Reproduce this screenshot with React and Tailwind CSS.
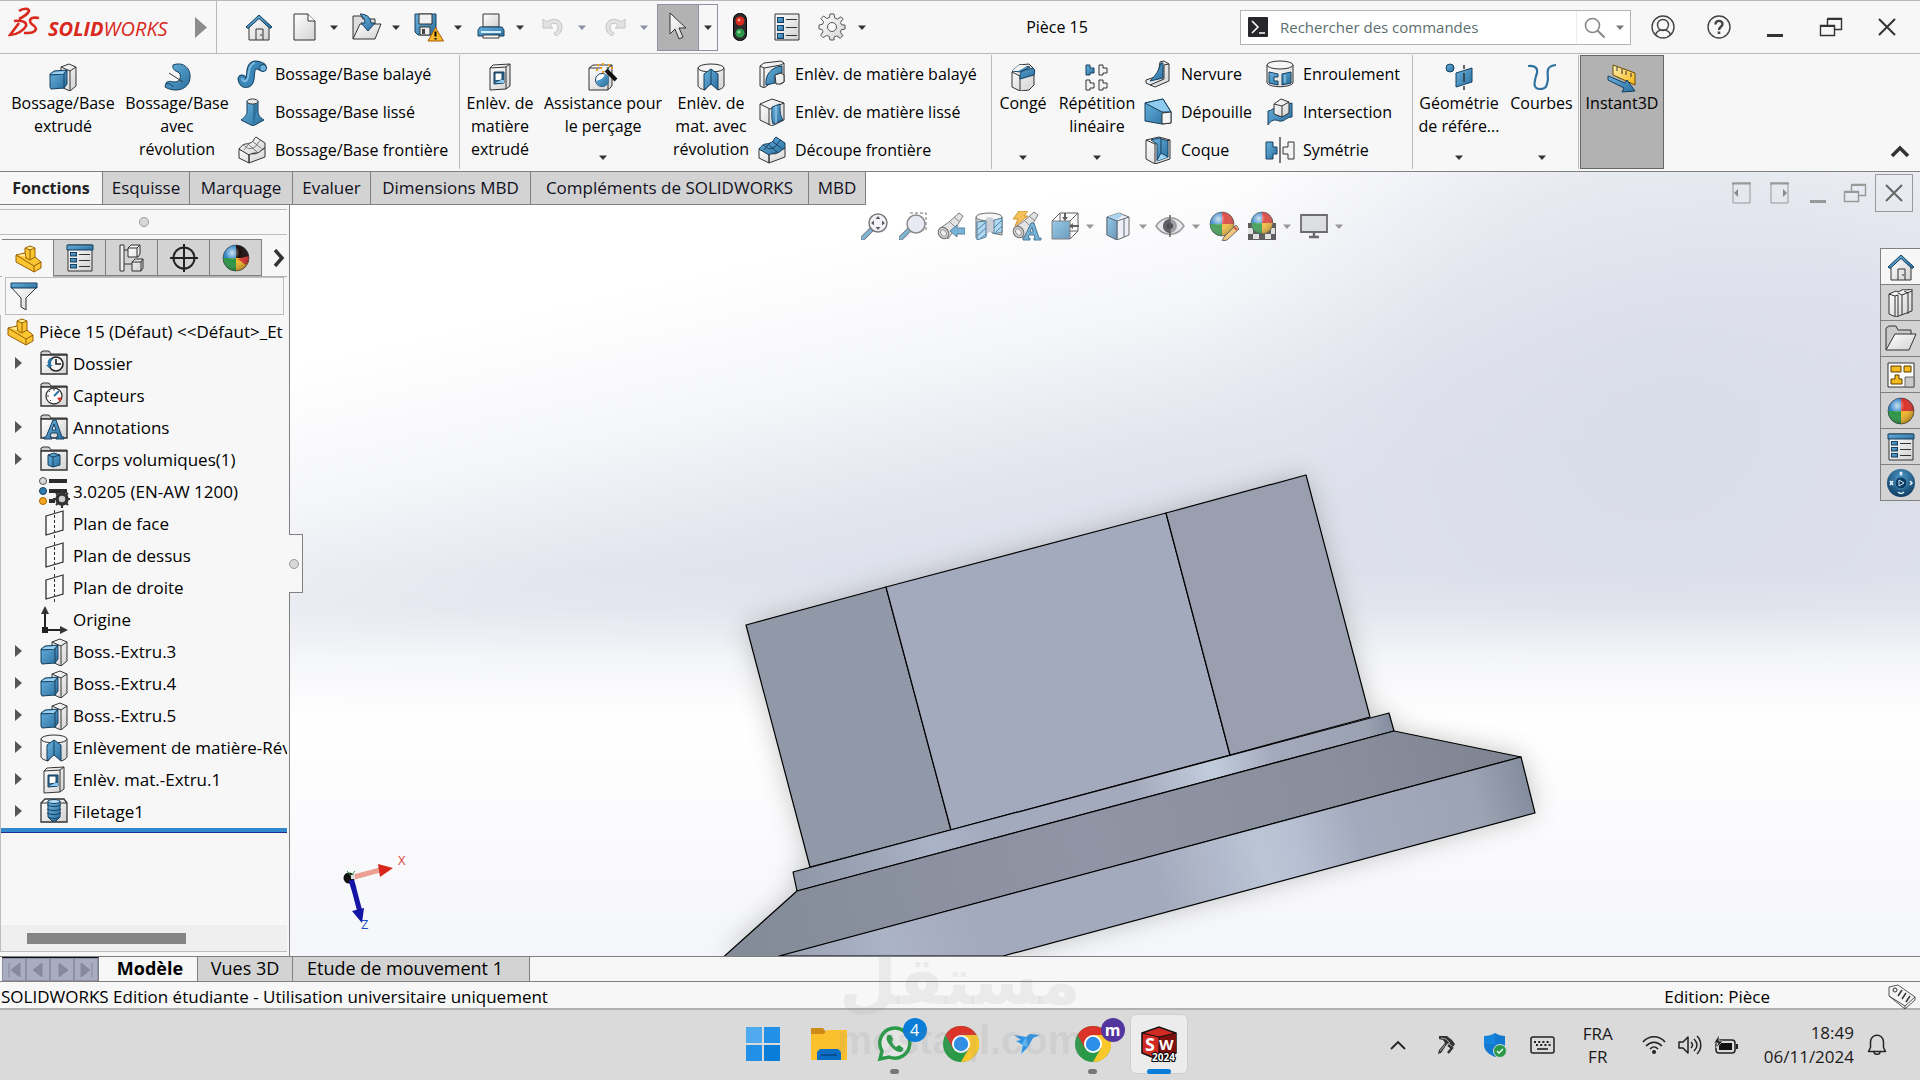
import React from "react";

const Svg = ({ s = 28, w, h, vb = "0 0 28 28", children, className = "" }) => (
  <svg width={w || s} height={h || s} viewBox={vb} fill="none" aria-hidden="true" className={"shrink-0 " + className}>
    {children}
  </svg>
);

const K = "#333";
const D = "#173f5f";

const SharedPaints = () => (
  <svg width="0" height="0" className="absolute" aria-hidden="true">
    <defs>
      <linearGradient id="blue" x1="0" y1="0" x2="1" y2="1">
        <stop offset="0" stopColor="#69b3de" />
        <stop offset="1" stopColor="#2a6f9f" />
      </linearGradient>
      <linearGradient id="gray" x1="0" y1="0" x2="1" y2="1">
        <stop offset="0" stopColor="#ffffff" />
        <stop offset="1" stopColor="#d2d2d2" />
      </linearGradient>
      <linearGradient id="gold" x1="0" y1="0" x2="1" y2="1">
        <stop offset="0" stopColor="#fff0b0" />
        <stop offset="1" stopColor="#f5b515" />
      </linearGradient>
      <radialGradient id="shine" cx="0.35" cy="0.3" r="0.75">
        <stop offset="0" stopColor="#fff" stopOpacity="0.75" />
        <stop offset="0.4" stopColor="#fff" stopOpacity="0" />
        <stop offset="1" stopColor="#000" stopOpacity="0.3" />
      </radialGradient>
      <radialGradient id="navy" cx="0.5" cy="0.3" r="0.7">
        <stop offset="0" stopColor="#4f97c6" />
        <stop offset="1" stopColor="#0d3d63" />
      </radialGradient>
    </defs>
  </svg>
);

const Caret = ({ color = "#333", className = "" }) => (
  <Svg w={8} h={5} vb="0 0 8 5" className={className}>
    <path d="M0 0.5h8L4 5z" fill={color} />
  </Svg>
);

const Ball = ({ cx = 14, cy = 14, r = 12, dark }) => (
  <g>
    <circle cx={cx} cy={cy} r={r} fill="#2f83c8" />
    <path d={`M${cx} ${cy}V${cy - r}A${r} ${r} 0 0 1 ${cx + r} ${cy}z`} fill={dark ? "#1b0d0b" : "#d9322b"} />
    <path d={`M${cx} ${cy}H${cx + r}A${r} ${r} 0 0 1 ${cx} ${cy + r}z`} fill="#f0b429" />
    <path d={`M${cx} ${cy}V${cy + r}A${r} ${r} 0 0 1 ${cx - r} ${cy}z`} fill="#2a9443" />
    {dark && <path d={`M${cx + r} ${cy - 2}a${r} ${r} 0 0 1 -3 9L${cx + 2} ${cy + 1}z`} fill="#d9322b" />}
    <circle cx={cx} cy={cy} r={r} fill="url(#shine)" stroke="#333" strokeWidth="0.6" />
  </g>
);

const Home = () => (
  <Svg>
    <path d="M4 14v13h20V14L14 4z" fill="url(#gray)" stroke={K} />
    <path d="M11 27v-11h7v11M16 21v2" stroke={K} />
    <path d="M1 14L14 2l13 12-2 1.5L14 5.500 3 15.500z" fill="url(#blue)" stroke={D} />
  </Svg>
);
const NewDoc = () => (
  <Svg>
    <path d="M3 1h14l7 7v19H3z" fill="url(#gray)" stroke={K} />
    <path d="M17 1v7h7" fill="#fff" stroke={K} />
  </Svg>
);
const Open = () => (
  <Svg w={32} h={28} vb="0 0 32 28">
    <path d="M2 26V3h8l2 3h12v6" fill="#ddd" stroke={K} />
    <path d="M2 26L9 11h21l-6 15z" fill="url(#gray)" stroke={K} />
    <path d="M9 1c6 0 11 3 11 9h4l-7 8-7-8h4c0-4-2-6-5-9z" fill="url(#blue)" stroke={D} />
  </Svg>
);
const Save = () => (
  <Svg w={30} h={29} vb="0 0 30 29">
    <path d="M1 1h21v21H4l-3-3z" fill="url(#blue)" stroke={D} />
    <path d="M5 1h13v10H5z" fill="#f1f1f1" stroke={K} />
    <path d="M6 14h10v8H6z" fill="#eee" stroke={K} />
    <path d="M8 16h3v5H8z" fill="#444" />
    <path d="M21.500 14.500l8 13.500h-15.500z" fill="#fbb92c" stroke="#a85a06" />
    <path d="M21.500 18.500v5M21.500 25v1.600" stroke="#000" strokeWidth="2" />
  </Svg>
);
const Print = () => (
  <Svg>
    <path d="M6 1h16v13H6z" fill="url(#gray)" stroke={K} />
    <path d="M3 14h22l2 3v6H1v-6z" fill="url(#blue)" stroke={D} />
    <path d="M4 19h20" stroke="#d7efff" strokeWidth="2" />
    <path d="M6 22h16v3H6z" fill="#fff" stroke={K} />
  </Svg>
);
const Undo = ({ flip }) => (
  <Svg s={24} vb="0 0 24 24" className={flip ? "-scale-x-100" : ""}>
    <path d="M2 4l3.500 3C12 2 21 4 21 12c0 4-2 7-6 9l-2-3c3-1 4-3 4-6 0-4-5-5-8-2l3 3H2z" fill="#e2e2e2" stroke="#c4c4c4" />
  </Svg>
);
const Cursor = () => (
  <Svg w={20} h={30} vb="0 0 20 30">
    <path d="M2 1v21l5-5 4 10 4-2-4-9h7z" fill="url(#gray)" stroke={K} />
  </Svg>
);
const Traffic = () => (
  <Svg w={16} h={28} vb="0 0 16 28">
    <rect x="1.500" y="0.500" width="13" height="27" rx="6" fill="#2c2c2c" stroke="#000" />
    <circle cx="8" cy="8" r="4.500" fill="#d92b1c" />
    <circle cx="8" cy="20" r="4.500" fill="#2c9a48" />
    <circle cx="7" cy="7" r="1.500" fill="#ff9b86" />
    <circle cx="7" cy="19" r="1.500" fill="#98dfa6" />
  </Svg>
);
const ListIcon = ({ header }) => (
  <Svg>
    <path d="M2 1h24v26H2z" fill="url(#gray)" stroke={K} />
    {header && <path d="M1 1h26v5H1z" fill="url(#blue)" stroke={D} />}
    {(header ? [8.5, 14.5, 20.5] : [4.5, 12.5, 20.5]).map((y) => (
      <g key={y}>
        <rect x="4.500" y={y} width="6" height={header ? 3.5 : 5} fill="url(#blue)" stroke={D} />
        <path d={`M13 ${y + 2}h11`} stroke={K} />
      </g>
    ))}
  </Svg>
);
const Gear = () => (
  <Svg>
    <path
      d="M12 1h4l.8 4 2.600 1.100L23 3.800 25.200 6 22.500 9.300l1 2.500L27 12v4l-3.600.7-1 2.400 2.400 3.600-2.600 2.600-3.400-2.400-2.600 1L16 27h-4l-.9-3.600-2.400-1-3.500 2.300-2.600-2.600 2.400-3.400-1-2.400L1 16v-4l3.600-.7 1-2.400L3 5.600 5.600 3l3.300 2.500 2.500-1z"
      fill="url(#gray)"
      stroke="#555"
    />
    <circle cx="14" cy="14" r="4.500" fill="#f7f7f7" stroke="#555" />
  </Svg>
);

const Extrude = () => (
  <Svg>
    <path d="M12 4l8-3 7 3v19l-6 5-9-4z" fill="url(#gray)" stroke={K} />
    <path d="M12 4l9 4v20M21 8l6-4" stroke={K} />
    <path d="M1 11l4-3 13-1v14l-3 4-13 1-1-2z" fill="url(#blue)" stroke={D} />
    <path d="M1 11l1 1 13-1 3-4M15 11v13" stroke={D} />
    <path d="M2 11l4-2 10-1-2 3z" fill="#9cd0ef" />
  </Svg>
);
const Revolve = () => (
  <Svg>
    <path d="M10 2c11-4 18 4 17 13-1 12-15 15-25 9l1-4c3-3 6-1 9-1 6 0 7-8 3-10-3-1-6-3-5-7z" fill="url(#blue)" stroke={D} />
    <path d="M3 21c2-1 6 0 7 3" stroke={D} />
    <path d="M6 10l14 9" stroke={K} />
  </Svg>
);
const Sweep = () => (
  <Svg w={30} h={28} vb="0 0 30 28">
    <path d="M5 19c1 6 7 6 8 0s0-14 6-14c3 0 4 1 6 2" stroke={D} strokeWidth="9" strokeLinecap="round" />
    <path d="M5 19c1 6 7 6 8 0s0-14 6-14c3 0 4 1 6 2" stroke="#3b86b8" strokeWidth="7" strokeLinecap="round" />
    <path d="M5 18c1 5 5 4 6-1s1-13 7-14" stroke="#7fbbe0" strokeWidth="2" />
    <circle cx="26" cy="8" r="3.500" fill="#6db4e0" stroke={D} />
  </Svg>
);
const Loft = () => (
  <Svg>
    <path d="M9 3v10c0 4-2 6-6 9l12 6 11-6c-5-3-6-6-6-9V3z" fill="url(#blue)" stroke={D} />
    <path d="M15 6v22c3-8 3-13 5-22z" fill="#235f8b" opacity="0.6" />
    <ellipse cx="14.500" cy="3.500" rx="5.500" ry="2.500" fill="#e8e8e8" stroke={K} />
  </Svg>
);
const Boundary = ({ blue }) => (
  <Svg>
    <path d="M1 13l10 5v9L1 22z M11 18c4-1 5 1 8-1l8-5v9l-16 6z" fill="url(#gray)" stroke={K} />
    <path d="M1 13C6 6 8 9 12 7c4-1 4-5 6-6l9 6v5c-4 1-5 5-8 5s-5 0-8 2z" fill={blue ? "url(#blue)" : "url(#gray)"} stroke={blue ? D : K} />
    <path d="M5 9c4 2 5 5 10 3 4-1 4-6 8-8M10 8l9 8M14 5l9 7M6 14c3-3 3-5 6-7" stroke={blue ? D : "#777"} />
  </Svg>
);
const CutExtrude = () => (
  <Svg>
    <path d="M4 5l3-3 17-1v22l-4 3-16 1z" fill="url(#gray)" stroke={K} />
    <path d="M4 5l16-1v22M20 4l4-3" stroke={K} />
    <path d="M8 9h10v11l-10 1z" fill="#2a6f9f" stroke={D} />
    <path d="M9 10h7v7l-7 1z" fill="#fff" stroke={D} />
    <path d="M9 20l6-3h3v3z" fill="#8cc9ee" />
  </Svg>
);
const HoleWizard = () => (
  <Svg w={30} h={28} vb="0 0 30 28">
    <path d="M1 5l4-3h19v21l-4 4-19 0z" fill="url(#gray)" stroke={K} />
    <path d="M1 5h19v22M20 5l4-3" stroke={K} />
    <circle cx="14" cy="17" r="6.500" fill="#fff" stroke={D} />
    <path d="M8 18c4-1 8-3 9-7a6.500 6.500 0 1 1-9 7z" fill="url(#blue)" />
    <path d="M17 6l11 11" stroke="#111" strokeWidth="4" />
    <path d="M15 4l3 3" stroke="#fff" strokeWidth="4" />
    <g fill="#f29a1c">
      <rect x="9" y="1" width="2" height="2" /><rect x="14" y="0" width="2" height="2" /><rect x="20" y="1" width="2" height="2" />
      <rect x="12" y="4" width="2" height="2" /><rect x="8" y="6" width="2" height="2" /><rect x="23" y="4" width="2" height="2" />
      <rect x="14" y="8" width="2" height="2" />
    </g>
  </Svg>
);
const CutRevolve = () => (
  <Svg>
    <path d="M1 5v18c1 2 3 3 7 4l6-9 7 9c3-1 5-2 6-4V5z" fill="url(#gray)" stroke={K} />
    <ellipse cx="14" cy="5" rx="13" ry="4" fill="#f4f4f4" stroke={K} />
    <path d="M14 6l-7 5v16l7-6 7 6V11z" fill="url(#blue)" stroke={D} />
    <path d="M14 6v15" stroke={D} />
  </Svg>
);
const CutSweep = () => (
  <Svg>
    <path d="M2 6l4-3 17-2 3 2v19l-3 2-9-2-8 6-4-2z" fill="url(#gray)" stroke={K} />
    <path d="M2 6l4 2 17-3 3-2M6 8v19" stroke={K} />
    <path d="M8 25C7 15 13 7 24 6v7c-6 0-8 4-7 10z" fill="url(#blue)" stroke={D} />
    <path d="M17 15l6-2 3 2v7l-4 2h-4z" fill="#eee" stroke={K} />
  </Svg>
);
const CutLoft = () => (
  <Svg>
    <path d="M2 6l12-5 12 4v17l-12 6-12-6z" fill="url(#gray)" stroke={K} />
    <path d="M2 6l10 5 14-6M11 11v16" stroke={K} />
    <path d="M14 9l8-3c0 8 0 11 3 16l-10 4c-2-7-1-10-1-17z" fill="url(#blue)" stroke={D} />
    <path d="M18 8v17" stroke="#b8ddf4" />
  </Svg>
);
const Fillet = () => (
  <Svg>
    <path d="M3 9l7-7 10-1 5 5v16l-5 5-9 1-8-4z" fill="url(#gray)" stroke={K} />
    <path d="M3 9l8 4v15M10 2L3 9" stroke={K} />
    <path d="M11 13c0-4 2-5 5-6l8-2c2 1 2 4 1 7l-14 4z M3 8l7-6 11 2-10 5z" fill="url(#blue)" stroke={D} />
    <path d="M3 8l7-6 10 0-11 6z" fill="#f2f2f2" />
  </Svg>
);
const Pattern = () => (
  <Svg>
    {[[3, 2, 1], [16, 2, 0], [3, 17, 0], [16, 17, 0]].map(([x, y, b]) => (
      <path key={x + "-" + y} d={`M${x} ${y}h4v3h4v5h-4v2h-4z`} fill={b ? "url(#blue)" : "#f4f4f4"} stroke={b ? D : K} />
    ))}
  </Svg>
);
const Rib = () => (
  <Svg>
    <path d="M16 2l4-1 5 3v17l-14 6-9-4v-3l12-4z" fill="url(#gray)" stroke={K} />
    <path d="M20 5l5-1M20 5v14L6 25" stroke={K} />
    <path d="M19 3v15l-13 3C12 15 15 10 17 3z" fill="url(#blue)" stroke={D} />
  </Svg>
);
const Draft = () => (
  <Svg>
    <path d="M1 5l18-4 8 13v11l-9 1L1 23z" fill="url(#blue)" stroke={D} />
    <path d="M1 5l18-4 8 13h-9z" fill="#8ecbef" stroke={D} />
    <path d="M18 15l9-1v11l-9 1z" fill="#f4f4f4" stroke={K} />
  </Svg>
);
const Shell = () => (
  <Svg>
    <path d="M2 4l13-3 11 3v19l-15 5-9-5z" fill="url(#gray)" stroke={K} />
    <path d="M2 4l9 4v20M11 8l15-4" stroke={K} />
    <path d="M7 4l8-2 9 3v16l-11 4V8z" fill="url(#blue)" stroke={D} />
    <path d="M13 25l4-8 7 4z" fill="#9bd3f3" />
    <path d="M17 3v14l7 4M17 17l-4 7" stroke={D} />
  </Svg>
);
const Wrap = () => (
  <Svg>
    <path d="M1 5v18c3 5 23 5 26 0V5z" fill="url(#gray)" stroke={K} />
    <ellipse cx="14" cy="5" rx="13" ry="4" fill="#f6f6f6" stroke={K} />
    <path d="M3 12l9 2v3H8v4h4v4l-9-2zM16 14l9-2v11l-9 2z" fill="url(#blue)" stroke={D} />
    <path d="M19 15v8" stroke="#b8ddf4" />
  </Svg>
);
const Intersect = () => (
  <Svg>
    <path d="M2 13c4 0 4-3 8-3 6 0 8-3 16-5v14c-6 0-7 5-13 4-4-2-8-1-11 4z" fill="url(#blue)" stroke={D} />
    <path d="M8 6l7-5 8 3v11l-7 4-8-3z" fill="url(#gray)" stroke={K} />
    <path d="M8 6l8 2v11M16 8l7-4" stroke={K} />
  </Svg>
);
const Mirror = () => (
  <Svg w={30} h={28} vb="0 0 30 28">
    <path d="M1 6h7v5h4v7H8v5H1z" fill="url(#blue)" stroke={D} />
    <path d="M29 6h-6v5h-5v7h5v5h6z" fill="#f4f4f4" stroke={K} />
    <path d="M15 1v26" stroke="#000" />
  </Svg>
);
const RefGeom = () => (
  <Svg>
    <circle cx="5" cy="5" r="4" fill="url(#blue)" stroke={D} />
    <path d="M11 10l16-5v14l-16 5z" fill="url(#blue)" stroke={D} />
    <path d="M19 2v4M19 10v9M19 23v4" stroke={K} strokeWidth="1.500" />
  </Svg>
);
const Curves = () => (
  <Svg>
    <path d="M0 3c8-1 11 3 8 10-2 7-3 13 4 13s7-4 8-10c-1-9-1-13 8-14" stroke="#2f719f" strokeWidth="2.200" />
  </Svg>
);
const Instant = () => (
  <Svg w={32} h={30} vb="0 0 32 30">
    <path d="M7 2l22 8v12L7 12z" fill="url(#gold)" stroke="#6b4a00" />
    <path d="M11 4v4M16 6v5M20 8v4M25 10v4" stroke="#333" />
    <path d="M2 13l17 7 2-3 8 11-13 1 2-4L2 17z" fill="url(#blue)" stroke={D} />
  </Svg>
);

const PartIcon = () => (
  <Svg>
    <path d="M2 10l9-2V3l5-2 5 2v9l6 5v6l-7 4L2 17z" fill="#fbc531" stroke="#9a5e05" />
    <path d="M2 10l18 11 7-4M20 21v6M11 8l1 5 4 2 5-3M11 3l5 2 5-2M16 5v9" stroke="#9a5e05" />
    <path d="M12 3l4-1 4 1-4 1zM4 10l7-1v3z" fill="#fff1a8" />
  </Svg>
);
const ConfigIcon = () => (
  <Svg>
    <path d="M2 1h4v26H2zM6 6h5M6 20h8" stroke={K} fill="#eee" />
    <path d="M10 4l3-3h9v9l-2 3h-10zM14 18l3-3h8v9l-2 3h-9z" fill="url(#gray)" stroke={K} />
    <path d="M10 4h9v9M19 4l3-3M14 18h9v9M23 18l2-3" stroke={K} />
  </Svg>
);
const Target = () => (
  <Svg>
    <circle cx="14" cy="14" r="10.500" stroke="#222" strokeWidth="2" />
    <path d="M14 0v28M0 14h28" stroke="#222" strokeWidth="2" />
  </Svg>
);
const Funnel = () => (
  <Svg>
    <path d="M1 5l10 11v9l5 3V16L27 5z" fill="url(#gray)" stroke={K} />
    <path d="M1 1h26v5H1z" fill="url(#blue)" stroke={D} />
  </Svg>
);
const Folder = ({ children }) => (
  <Svg>
    <path d="M1 5V2l2-1h6l2 3h16v1z" fill="#cfcfcf" stroke={K} />
    <path d="M1 5h26v19H1z" fill="url(#gray)" stroke={K} strokeWidth="1.400" />
    {children}
  </Svg>
);
const History = () => (
  <Folder>
    <circle cx="16" cy="14" r="7" fill="#f4f4f4" stroke="#222" strokeWidth="1.600" />
    <path d="M16 9v5h5" stroke="#222" strokeWidth="1.600" />
    <path d="M10 8c-2 2-3 4-2 7H6l3 3 4-3h-2c0-3 0-4 2-6z" fill="#2a74a5" />
  </Folder>
);
const Sensors = () => (
  <Folder>
    <circle cx="14" cy="14" r="8" fill="#fff" stroke="#333" strokeWidth="1.300" />
    <path d="M14 14l5-5" stroke="#2a74a5" strokeWidth="2" />
    <path d="M14 7v2M7 14h2M9 9l1 1M10 19l1-1" stroke="#333" />
    <path d="M22 15l-5 1 3 4z" fill="#d9322b" />
  </Folder>
);
const Notes = () => (
  <Folder>
    <path d="M6 23l7-17h3l6 17h2v2h-8v-2h2l-1-4h-6l-1 4h2v2H4v-2zM12 16h4l-2-6z" fill="url(#blue)" stroke={D} fillRule="evenodd" />
  </Folder>
);
const Bodies = () => (
  <Folder>
    <path d="M8 9l6-2 6 2v10l-7 2-5-2z" fill="url(#blue)" stroke={D} />
    <path d="M8 9l5 2v10M13 11l7-2" stroke={D} />
  </Folder>
);
const Material = () => (
  <Svg w={32} h={32} vb="0 0 32 32">
    <circle cx="5" cy="5" r="3.500" fill="#d8d8d8" stroke="#555" />
    <circle cx="5" cy="15" r="3.500" fill="#2f7cb0" stroke={D} />
    <circle cx="5" cy="25" r="3.500" fill="#f3a81c" stroke="#a86500" />
    <path d="M11 5h18M11 15h18M11 25h6" stroke="#2b2b2b" strokeWidth="4" />
    <circle cx="24" cy="23" r="5" stroke="#333" strokeWidth="3.500" fill="#ccc" />
    <path d="M24 14v4M24 28v4M15 23h4M29 23h3M18 17l3 3M27 26l3 3M30 17l-3 3M18 29l3-3" stroke="#333" strokeWidth="2.200" />
  </Svg>
);
const Plane = () => (
  <Svg>
    <path d="M6 6l17-5v19L6 25z" fill="#fafafa" stroke={K} strokeWidth="1.300" />
    <path d="M14.500 0v28" stroke={K} strokeDasharray="3 2" />
  </Svg>
);
const Origin = () => (
  <Svg>
    <path d="M5 24V5M5 24h17" stroke="#222" strokeWidth="2" />
    <path d="M5 0l4 8H1zM28 24l-8 4v-8z" fill="#333" />
    <path d="M2 21h6v6H2z" fill="#222" />
  </Svg>
);
const Thread = () => (
  <Svg>
    <path d="M1 5l4-4h19l3 4v19H1z" fill="url(#gray)" stroke={K} strokeWidth="1.300" />
    <path d="M1 5h26" stroke={K} />
    <path d="M8 3h12v16l-4 4h-4l-4-4z" fill="url(#blue)" stroke={D} />
    <path d="M7 7c4 2 10 2 14 0M7 11c4 2 10 2 14 0M7 15c4 2 10 2 14 0M8 19c4 2 8 2 12 0" stroke={D} />
    <ellipse cx="14" cy="3.500" rx="6" ry="2" fill="#b3dcf3" stroke={D} />
  </Svg>
);

const Lens = ({ children }) => (
  <>
    <path d="M11 17l-9 9" stroke="#555" strokeWidth="5" strokeLinecap="round" />
    <path d="M10 18l-8 8" stroke="#6aa9cf" strokeWidth="3.500" strokeLinecap="round" />
    {children}
  </>
);
const ZoomFit = () => (
  <Svg>
    <Lens>
      <circle cx="17" cy="11" r="9" fill="#f2f3f8" stroke="#666" strokeWidth="1.500" />
      <path d="M17 4l2.500 3h-5zM17 18l2.500-3h-5zM10 11l3-2.500v5zM24 11l-3-2.500v5z" fill="#444" />
    </Lens>
  </Svg>
);
const ZoomArea = () => (
  <Svg>
    <path d="M11 1h16v17h-4" stroke="#555" strokeDasharray="3 2" />
    <Lens>
      <circle cx="17" cy="12" r="9" fill="#e4e6f0" stroke="#777" strokeWidth="1.500" />
    </Lens>
  </Svg>
);
const Scope = () => (
  <g>
    <path d="M2 17L12 10l10-9 4 3-6 10-9 13z" fill="#dedede" stroke="#666" />
    <path d="M12 9l7 7M17 5l6 5" stroke="#777" />
    <ellipse cx="6.500" cy="21" rx="5" ry="6" transform="rotate(-35 6.500 21)" fill="#c9c9c9" stroke="#555" />
    <ellipse cx="6.500" cy="21" rx="2.500" ry="3.500" transform="rotate(-35 6.500 21)" fill="#eee" stroke="#888" />
  </g>
);
const PrevView = () => (
  <Svg>
    <Scope />
    <path d="M13 19l7-6v3h8v6h-8v3z" fill="#5ea6d2" stroke="#3a6a8c" />
  </Svg>
);
const Section = () => (
  <Svg>
    <path d="M1 5v21l10-2V9h6v12l10 2V5z" fill="#d5d7de" stroke="#555" />
    <ellipse cx="14" cy="5" rx="13" ry="4" fill="#f6f6f6" stroke="#555" />
    <path d="M11 6c2-1 5-1 7 0v14c-3-1-5 1-7 3z" fill="#c4c6ce" />
    <path d="M2 10l9-1v16l-9 3zM19 8l8-2v14l-8 2z" fill="#a5d2ee" stroke="#3a6a8c" />
    <path d="M2 18l9-8M2 24l9-8M5 27l6-5M19 16l8-8M20 21l7-7" stroke="#2a6f9f" />
  </Svg>
);
const DynView = () => (
  <Svg w={30} h={30} vb="0 0 30 30">
    <Scope />
    <path d="M7 0h9l-4 5h4L3 15l3-7H1z" fill="#f5b73c" stroke="#c98518" />
    <path d="M12 27l7-15h3l5 15h2v2h-7v-2h1l-1-3h-5l-1 3h2v2h-7v-2zM18 21h3l-1-5z" fill="#5ea6d2" stroke="#33658a" fillRule="evenodd" />
  </Svg>
);
const Orient = () => (
  <Svg>
    <path d="M1 9l8-8h18v18l-8 8M27 1l-8 8M9 1v8M27 19H19" stroke="#444" />
    <path d="M1 9h18v18H1z" fill="url(#blue)" stroke="#444" opacity="0.8" />
    <path d="M14 1v5M28 14h-7" stroke="#444" strokeWidth="2" />
    <path d="M14 9l-3-4h6zM18 14l4-3v6z" fill="#444" />
  </Svg>
);
const Display = () => (
  <Svg>
    <path d="M3 5l12-4 10 4v18l-12 5-10-5z" fill="#eceef5" stroke="#555" />
    <path d="M3 5l10 4v19L3 23z" fill="url(#blue)" stroke="#456" opacity="0.8" />
    <path d="M3 5l12-4 4 2-6 5z" fill="#9fd0ee" />
    <path d="M3 5l10 4 12-4M13 9v19M20 7v18" stroke="#456" />
  </Svg>
);
const Eye = () => (
  <Svg w={30} h={24} vb="0 0 30 24">
    <path d="M1 12C8 1 22 1 29 12 22 23 8 23 1 12z" fill="#e8e8ec" stroke="#888" strokeWidth="1.500" />
    <circle cx="15" cy="12" r="7" fill="#8f9096" />
    <path d="M15 5a7 7 0 0 0 0 14z" fill="#45464c" />
    <circle cx="15" cy="12" r="3" fill="#2a2a2e" />
    <path d="M15 1v22" stroke="#444" strokeWidth="1.500" />
  </Svg>
);
const Appearance = () => (
  <Svg w={30} h={30} vb="0 0 30 30">
    <Ball cx={13} cy={13} r={12} />
    <path d="M27 14l-12 12-2 4 5-1 12-11z" fill="#f0bd63" stroke="#555" />
    <path d="M25 16l3 3" stroke="#c33" strokeWidth="2" />
  </Svg>
);
const Scene = () => (
  <Svg w={28} h={30} vb="0 0 28 30">
    <path d="M0 12h28v17H0z" fill="#444" />
    <path d="M4 12h5v5H4zM0 17h5v6H0zM5 23h6v5H5zM23 17h4v6h-4zM17 23h6v5h-6z" fill="#ddd" />
    <Ball cx={14} cy={12} r={11} />
  </Svg>
);
const Monitor = () => (
  <Svg>
    <path d="M1 3h26v17H1z" fill="#d9dadf" stroke="#555" strokeWidth="1.800" />
    <path d="M14 20v4M9 25h10" stroke="#555" strokeWidth="2.500" />
  </Svg>
);

const Books = () => (
  <Svg>
    <path d="M2 5l7-3 2 1 6-3 2 1 6-1v22l-16 6-7-3z" fill="url(#gray)" stroke={K} />
    <path d="M2 5l6 2v20M8 7l3-1v21M11 4l4 2v20M17 2l4 2v21M15 6l10-4" stroke={K} />
  </Svg>
);
const BigFolder = () => (
  <Svg w={32} h={28} vb="0 0 32 28">
    <path d="M1 25V3l3-2h7l2 4h13v5" fill="#c9c9c9" stroke={K} />
    <path d="M1 25L10 9h21l-7 16z" fill="url(#gray)" stroke={K} />
  </Svg>
);
const Palette = () => (
  <Svg>
    <path d="M1 2h26v24H1z" fill="#fff" stroke="#333" />
    <path d="M4 5h10v6H4zM17 5h7v6h-7zM8 14h4v4h3v5H4v-5h4z" fill="#f6bc1f" stroke="#5d3d00" />
    <path d="M18 16h9v10h-9z" fill="#c8c8c8" stroke="#666" />
  </Svg>
);
const Forum = () => (
  <Svg s={30} vb="0 0 30 30">
    <circle cx="15" cy="15" r="14" fill="url(#navy)" />
    <circle cx="15" cy="15" r="6" stroke="#3f86b8" fill="#0d3d63" />
    <path d="M13 12l5 3-5 3z" stroke="#cfe8fa" />
    <path d="M4 13l3 4M7 13l-3 4M14 4l2 3M16 4l-2 3M12 24c2 2 4 2 6 0M24 13l2 2-2 2" stroke="#e6f4ff" strokeWidth="1.500" />
  </Svg>
);

const BigButton = ({ icon, lines, caret, className = "" }) => (
  <button className={"flex h-[114px] shrink-0 flex-col items-center whitespace-nowrap border border-transparent pt-[7px] " + className}>
    <span className="flex h-[29px] items-start justify-center">{icon}</span>
    {lines.map((l) => (
      <span key={l} className="block leading-[23px]">{l}</span>
    ))}
    {caret && <Caret className="mt-auto mb-2" />}
  </button>
);

const SmallColumn = ({ items, className = "" }) => (
  <div className={"flex shrink-0 flex-col " + className}>
    {items.map(([icon, label]) => (
      <button key={label} className="flex h-[38px] items-center gap-2 whitespace-nowrap text-left">
        <span className="flex w-[30px] shrink-0 justify-center">{icon}</span>
        {label}
      </button>
    ))}
  </div>
);

const Sep = () => <div className="h-[114px] w-px shrink-0 bg-[#bcbcbc]" />;

const SplitTool = ({ icon, label, muted }) => (
  <div className="flex h-12 shrink-0 items-center">
    <button aria-label={label} className="flex w-[33px] justify-center">{icon}</button>
    <button aria-label={label + " options"} className="flex w-[26px] justify-center">
      <Caret color={muted ? "#8b8fa3" : "#333"} />
    </button>
  </div>
);

const RestoreIcon = ({ color }) => (
  <Svg w={24} h={20} vb="0 0 24 20">
    <path d="M8.500 1.500h14v11h-7M1.500 8.500h14v10h-14zM8.500 2v6" stroke={color} strokeWidth="1.400" />
    <path d="M8 2h15M1 9h15" stroke={color} strokeWidth="2" />
  </Svg>
);
const CloseIcon = ({ color }) => (
  <Svg w={18} h={18} vb="0 0 18 18">
    <path d="M1 1l16 16M17 1L1 17" stroke={color} strokeWidth="2" />
  </Svg>
);

const TitleBar = () => (
  <header className="flex h-[54px] shrink-0 items-center border-t border-b border-[#b9b9b9] bg-[#f7f7f7]">
    <div className="flex h-full w-[217px] shrink-0 items-center border-r border-[#b9b9b9] pl-2">
      <Svg w={32} h={32} vb="0 0 32 32" className="mb-2">
        <path
          d="M11 4c4-3 10-3 10 0-1 3-6 6-10 8M11 16L2 28c7 0 14-5 16-9 1-4-4-6-12-5M31 11c-6-1-9 0-9 3 0 4 6 4 6 8-1 4-6 4-12 4"
          stroke="#d9291c"
          strokeWidth="2.600"
        />
      </Svg>
      <span className="ml-2 mt-1 text-[20px] italic leading-none text-[#d9291c]">
        <b>SOLID</b>WORKS
      </span>
      <button aria-label="Afficher le menu" className="ml-auto mr-[9px]">
        <Svg w={12} h={21} vb="0 0 12 21"><path d="M0 0l12 10.500L0 21z" fill="#8c8c8c" /></Svg>
      </button>
    </div>
    <div className="flex shrink-0 items-center">
      <button aria-label="Accueil" className="ml-[28px] mr-[15px]"><Home /></button>
      <div className="flex gap-[3px]">
        <SplitTool icon={<NewDoc />} label="Nouveau" />
        <SplitTool icon={<Open />} label="Ouvrir" />
        <SplitTool icon={<Save />} label="Enregistrer" />
        <SplitTool icon={<Print />} label="Imprimer" />
        <SplitTool icon={<Undo />} label="Annuler" muted />
        <SplitTool icon={<Undo flip />} label="Rétablir" muted />
      </div>
      <div className="flex h-[47px] w-[61px] border border-[#8d93a5]">
        <button aria-label="Sélectionner" className="flex w-[41px] items-center justify-center border-r border-[#8d93a5] bg-[#b2b2b2]"><Cursor /></button>
        <button aria-label="Options de sélection" className="flex flex-1 items-center justify-center"><Caret /></button>
      </div>
      <button aria-label="Reconstruire" className="ml-[14px]"><Traffic /></button>
      <button aria-label="Propriétés" className="ml-[25px]"><ListIcon /></button>
      <button aria-label="Options" className="ml-[17px]"><Gear /></button>
      <button aria-label="Plus d'options" className="ml-[12px]"><Caret /></button>
    </div>
    <h1 className="flex-1 pl-2 text-center text-[16px]">Pièce 15</h1>
    <form className="flex h-[35px] w-[391px] shrink-0 items-center border border-[#b4b4b4] bg-white">
      <Svg w={20} h={20} vb="0 0 20 20" className="ml-[7px]">
        <rect width="20" height="20" rx="1" fill="#26262b" />
        <path d="M4 4l6 6-6 6M11 16h6" stroke="#fff" strokeWidth="1.500" />
      </Svg>
      <input
        aria-label="Rechercher des commandes"
        placeholder="Rechercher des commandes"
        className="ml-3 h-full min-w-0 flex-1 border-r border-[#eee] text-[15px] outline-none placeholder:text-[#5a6e6e]"
      />
      <button type="button" aria-label="Rechercher" className="ml-[7px]">
        <Svg w={21} h={21} vb="0 0 21 21">
          <circle cx="8.500" cy="8.500" r="7" stroke="#888" strokeWidth="1.600" />
          <path d="M13.500 13.500l7 7" stroke="#888" strokeWidth="2" />
        </Svg>
      </button>
      <button type="button" aria-label="Options de recherche" className="ml-[11px] mr-[6px]"><Caret color="#777" /></button>
    </form>
    <button aria-label="Connexion" className="ml-5">
      <Svg s={24} vb="0 0 24 24">
        <circle cx="12" cy="12" r="11" stroke="#444" strokeWidth="1.400" />
        <circle cx="12" cy="10" r="5.500" stroke="#444" strokeWidth="1.400" />
        <path d="M4.500 20c1-4 4-5 7.500-5s6.500 1 7.500 5" stroke="#444" strokeWidth="1.400" />
      </Svg>
    </button>
    <button aria-label="Aide" className="ml-8">
      <Svg s={24} vb="0 0 24 24">
        <circle cx="12" cy="12" r="11" stroke="#444" strokeWidth="1.400" />
        <path d="M8.500 9.500c0-5 7-4.500 7-.5 0 3-3.500 2.500-3.500 6" stroke="#444" strokeWidth="2.400" />
        <path d="M12 16.500v2.500" stroke="#444" strokeWidth="2.600" />
      </Svg>
    </button>
    <button aria-label="Réduire" className="ml-9 mt-4 h-[3px] w-4 bg-[#333]" />
    <button aria-label="Restaurer" className="ml-9"><RestoreIcon color="#333" /></button>
    <button aria-label="Fermer" className="ml-[35px] mr-6"><CloseIcon color="#333" /></button>
  </header>
);

const Ribbon = () => (
  <div className="flex h-[118px] shrink-0 items-start overflow-hidden border-b border-[#808080] bg-[#f7f7f7] pt-px text-[16px]">
    <BigButton className="ml-[6px] w-[114px]" icon={<Extrude />} lines={["Bossage/Base", "extrudé"]} />
    <BigButton className="w-[114px]" icon={<Revolve />} lines={["Bossage/Base", "avec", "révolution"]} />
    <SmallColumn
      className="ml-[3px] w-[222px]"
      items={[[<Sweep />, "Bossage/Base balayé"], [<Loft />, "Bossage/Base lissé"], [<Boundary />, "Bossage/Base frontière"]]}
    />
    <Sep />
    <BigButton className="w-[80px]" icon={<CutExtrude />} lines={["Enlèv. de", "matière", "extrudé"]} />
    <BigButton className="w-[126px]" icon={<HoleWizard />} lines={["Assistance pour", "le perçage"]} caret />
    <BigButton className="w-[90px]" icon={<CutRevolve />} lines={["Enlèv. de", "mat. avec", "révolution"]} />
    <SmallColumn
      className="ml-px w-[234px]"
      items={[[<CutSweep />, "Enlèv. de matière balayé"], [<CutLoft />, "Enlèv. de matière lissé"], [<Boundary blue />, "Découpe frontière"]]}
    />
    <Sep />
    <BigButton className="w-[62px]" icon={<Fillet />} lines={["Congé"]} caret />
    <BigButton className="w-[86px]" icon={<Pattern />} lines={["Répétition", "linéaire"]} caret />
    <SmallColumn className="ml-[3px] w-[122px]" items={[[<Rib />, "Nervure"], [<Draft />, "Dépouille"], [<Shell />, "Coque"]]} />
    <SmallColumn className="w-[147px]" items={[[<Wrap />, "Enroulement"], [<Intersect />, "Intersection"], [<Mirror />, "Symétrie"]]} />
    <Sep />
    <BigButton className="w-[92px]" icon={<RefGeom />} lines={["Géométrie", "de référe..."]} caret />
    <BigButton className="w-[73px]" icon={<Curves />} lines={["Courbes"]} caret />
    <Sep />
    <BigButton className="ml-px w-[84px] border-[#666]! bg-[#b2b2b2]" icon={<Instant />} lines={["Instant3D"]} />
    <button aria-label="Réduire le ruban" className="mt-[90px] mr-[10px] ml-auto">
      <Svg w={20} h={13} vb="0 0 20 13"><path d="M2 11l8-8 8 8" stroke="#333" strokeWidth="3.500" /></Svg>
    </button>
  </div>
);

const tabs = [
  ["Esquisse", "w-[87px]"],
  ["Marquage", "w-[103px]"],
  ["Evaluer", "w-[78px]"],
  ["Dimensions MBD", "w-[160px]"],
  ["Compléments de SOLIDWORKS", "w-[278px]"],
  ["MBD", "w-[57px]"],
];
const CommandTabs = () => (
  <nav className="flex h-[33px]">
    <button className="w-[102px] border-b border-[#808080] bg-[#f7f7f7] text-[16px] font-bold text-[#222]">Fonctions</button>
    {tabs.map(([t, w]) => (
      <button key={t} className={"border-b border-l border-[#808080] bg-[#d3d3d3] whitespace-nowrap text-[#111122] last:w-[58px] last:border-r " + w}>
        {t}
      </button>
    ))}
  </nav>
);

const tree = [
  [<History />, "Dossier", true],
  [<Sensors />, "Capteurs", false],
  [<Notes />, "Annotations", true],
  [<Bodies />, "Corps volumiques(1)", true],
  [<Material />, "3.0205 (EN-AW 1200)", false],
  [<Plane />, "Plan de face", false],
  [<Plane />, "Plan de dessus", false],
  [<Plane />, "Plan de droite", false],
  [<Origin />, "Origine", false],
  [<Extrude />, "Boss.-Extru.3", true],
  [<Extrude />, "Boss.-Extru.4", true],
  [<Extrude />, "Boss.-Extru.5", true],
  [<CutRevolve />, "Enlèvement de matière-Rév", true],
  [<CutExtrude />, "Enlèv. mat.-Extru.1", true],
  [<Thread />, "Filetage1", true],
];

const Dot = () => <span className="block size-[10px] rounded-full border border-[#999] bg-[#d8d8d8]" />;

const panelTabs = [
  ["Propriétés", <ListIcon header />],
  ["Configurations", <ConfigIcon />],
  ["Cotes", <Target />],
  ["Affichage", <Svg><Ball dark r={13} /></Svg>],
];

const FeaturePanel = () => (
  <aside className="relative flex w-[290px] shrink-0 flex-col border-r border-[#808080] bg-[#f7f7f7] pr-[2px]">
    <div className="mt-1 flex h-[26px] items-center justify-center border-y border-[#bdbdbd]"><Dot /></div>
    <div className="mt-1 flex h-[38px] border-b border-[#b0b0b0] pl-[2px]">
      <button aria-label="Arbre de création" className="-mb-px flex w-[51px] items-center justify-center border-t border-[#808080] bg-[#f7f7f7]"><PartIcon /></button>
      {panelTabs.map(([label, icon]) => (
        <button key={label} aria-label={label} className="flex w-[52px] items-center justify-center border-t border-b border-l border-[#808080] bg-[#d3d3d3]">
          {icon}
        </button>
      ))}
      <div className="flex flex-1 items-center justify-end border-l border-[#808080] pr-[2px]">
        <Svg w={12} h={18} vb="0 0 12 18"><path d="M2 1l7 8-7 8" stroke="#333" strokeWidth="3.500" /></Svg>
      </div>
    </div>
    <label className="mr-[3px] ml-[5px] flex h-[38px] items-center border border-[#bdbdbd] pl-[4px]">
      <Funnel />
      <input aria-label="Filtrer l'arbre" className="min-w-0 flex-1 outline-none" />
    </label>
    <div className="flex flex-1 flex-col overflow-hidden border-l border-[#bdbdbd]">
      <div className="flex h-[33px] shrink-0 items-center gap-[5px] overflow-hidden pl-[5px] whitespace-nowrap">
        <PartIcon />
        Pièce 15 (Défaut) &lt;&lt;Défaut&gt;_Et
      </div>
      <ul>
        {tree.map(([icon, label, expand], i) => (
          <li key={i} className="flex h-8 items-center overflow-hidden whitespace-nowrap">
            <span className="flex w-[34px] shrink-0 justify-center">
              {expand && <Svg w={7} h={12} vb="0 0 7 12" className="mb-[3px]"><path d="M0 0l7 6-7 6z" fill="#555" /></Svg>}
            </span>
            <span className="mx-[3px] flex w-[32px] shrink-0 justify-center">{icon}</span>
            {label}
          </li>
        ))}
      </ul>
      <div className="h-[5px] shrink-0 border-b border-[#1a2d8c] bg-[#3288cc]" />
      <div className="mt-auto flex h-[26px] items-center bg-[#efefef] pl-[26px]">
        <div className="h-[11px] w-[159px] bg-[#858585]" />
      </div>
    </div>
    <div className="h-[5px] border-t border-[#bdbdbd]" />
    <button aria-label="Masquer le panneau" className="absolute top-[329px] left-full flex h-[59px] w-[14px] items-center border border-l-0 border-[#808080] bg-[#f7f7f7]">
      <Dot />
    </button>
  </aside>
);

const hud = [
  [<ZoomFit />, "Zoom au mieux", 0, "ml-0"],
  [<ZoomArea />, "Zoom fenêtre", 0, "ml-[10px]"],
  [<PrevView />, "Vue précédente", 0, "ml-[10px]"],
  [<Section />, "Vue en coupe", 0, "ml-[10px]"],
  [<DynView />, "Annotations dynamiques", 0, "ml-[9px]"],
  [<Orient />, "Orientation", 1, "ml-[9px]"],
  [<Display />, "Style d'affichage", 1, "ml-[10px]"],
  [<Eye />, "Cacher/Afficher", 1, "ml-[8px]"],
  [<Appearance />, "Apparence", 0, "ml-[9px]"],
  [<Scene />, "Scène", 1, "ml-[9px]"],
  [<Monitor />, "Paramètres de vue", 1, "ml-[9px]"],
];

const HudToolbar = () => (
  <div className="flex h-[30px] items-center">
    {hud.map(([icon, label, caret, ml]) => (
      <button key={label} aria-label={label} className={"flex items-center opacity-85 " + ml}>
        {icon}
        {caret ? <Caret color="#888" className="ml-[7px]" /> : null}
      </button>
    ))}
  </div>
);

const PageIcon = ({ right }) => (
  <Svg w={19} h={22} vb="0 0 19 22">
    <path d="M1 1h17v20H1z" stroke="#999" />
    <path d="M0 1.500h19" stroke="#999" strokeWidth="2" />
    <path d={right ? "M13 7v8l4-4z" : "M6 7v8l-4-4z"} fill="#888" />
  </Svg>
);

const taskPane = [
  ["Ressources", <Home />],
  ["Bibliothèque", <Books />],
  ["Explorateur", <BigFolder />],
  ["Palette de vues", <Palette />],
  ["Apparences", <Svg><Ball r={13} /></Svg>],
  ["Propriétés personnalisées", <ListIcon header />],
  ["Forum", <Forum />],
];

const outline = "M746 625L886 587 1166 513 1306 475 1370 717 1389 713 1394 731 1521 757 1535 813 1003 956H724L797 891 793 872 810 867z";

const Scene3D = () => (
  <svg viewBox="0 172 1920 784" preserveAspectRatio="xMinYMin slice" className="absolute inset-0 h-full w-full" aria-label="Modèle 3D">
    <defs>
      <linearGradient id="sky" gradientUnits="userSpaceOnUse" x1="800" y1="250" x2="900" y2="690">
        <stop offset="0" stopColor="#d8dce8" stopOpacity="0" />
        <stop offset="0.3" stopColor="#d8dce8" stopOpacity="0.25" />
        <stop offset="0.6" stopColor="#d8dce8" stopOpacity="0.75" />
        <stop offset="0.8" stopColor="#d8dce8" stopOpacity="0.9" />
        <stop offset="1" stopColor="#d8dce8" stopOpacity="0.9" />
      </linearGradient>
      <linearGradient id="ground" x1="0" y1="0" x2="0" y2="1">
        <stop offset="0" stopColor="#fff" stopOpacity="0" />
        <stop offset="0.25" stopColor="#fff" stopOpacity="0.15" />
        <stop offset="0.6" stopColor="#fff" stopOpacity="0.7" />
        <stop offset="1" stopColor="#fff" />
      </linearGradient>
      <linearGradient id="floor" x1="0" y1="0" x2="0" y2="1">
        <stop offset="0" stopColor="#fff" />
        <stop offset="1" stopColor="#f5f6fa" />
      </linearGradient>
      <radialGradient id="haze" gradientUnits="userSpaceOnUse" cx="1660" cy="420" r="480">
        <stop offset="0" stopColor="#d8dce8" stopOpacity="0.8" />
        <stop offset="0.5" stopColor="#dcdfea" stopOpacity="0.6" />
        <stop offset="1" stopColor="#e6e8f0" stopOpacity="0" />
      </radialGradient>
      <linearGradient id="ring" gradientUnits="userSpaceOnUse" x1="779" y1="956" x2="1521" y2="757">
        <stop offset="0" stopColor="#9aa1b2" />
        <stop offset="0.14" stopColor="#abb3c7" />
        <stop offset="0.26" stopColor="#a4aabd" />
        <stop offset="0.5" stopColor="#a4aabd" />
        <stop offset="0.64" stopColor="#bac5d6" />
        <stop offset="0.69" stopColor="#b6c0d2" />
        <stop offset="0.77" stopColor="#a4aabd" />
        <stop offset="0.93" stopColor="#9ca3b3" />
        <stop offset="1" stopColor="#848d9e" />
      </linearGradient>
      <linearGradient id="collar" gradientUnits="userSpaceOnUse" x1="793" y1="872" x2="1389" y2="713">
        <stop offset="0" stopColor="#8f97a8" />
        <stop offset="0.13" stopColor="#9ea5b7" />
        <stop offset="0.23" stopColor="#abb3c8" />
        <stop offset="0.33" stopColor="#a4aabd" />
        <stop offset="0.57" stopColor="#a4aabd" />
        <stop offset="0.7" stopColor="#c2cddc" />
        <stop offset="0.8" stopColor="#a4aabd" />
        <stop offset="0.96" stopColor="#9aa1b1" />
        <stop offset="1" stopColor="#848d9e" />
      </linearGradient>
      <linearGradient id="cone" gradientUnits="userSpaceOnUse" x1="760" y1="930" x2="1500" y2="740">
        <stop offset="0" stopColor="#858c99" />
        <stop offset="0.45" stopColor="#9095a5" />
        <stop offset="0.8" stopColor="#888e9b" />
        <stop offset="1" stopColor="#7e8492" />
      </linearGradient>
      <filter id="soft" x="-10%" y="-10%" width="120%" height="120%"><feGaussianBlur stdDeviation="13" /></filter>
    </defs>
    <rect y="172" width="1920" height="784" fill="#fff" />
    <rect y="172" width="1920" height="784" fill="url(#sky)" />
    <rect y="172" width="1920" height="784" fill="url(#haze)" />
    <rect y="570" width="1920" height="150" fill="url(#ground)" />
    <rect y="719" width="1920" height="237" fill="url(#floor)" />
    <path d={outline} fill="#6a6c68" opacity="0.4" filter="url(#soft)" />
    <g stroke="#000" strokeWidth="1.200" strokeLinejoin="round">
      <path d="M746 625L886 587 951 830 810 867z" fill="#9198a8" />
      <path d="M886 587L1166 513 1230 755 951 830z" fill="#a4aabd" />
      <path d="M1166 513L1306 475 1370 717 1230 755z" fill="#999faf" />
      <path d="M793 872L1389 713 1394 731 797 891z" fill="url(#collar)" />
      <path d="M797 891L1394 731 1521 757 779 956.500H724z" fill="url(#cone)" />
      <path d="M779 956L1521 757 1535 813 1003 956z" fill="url(#ring)" />
    </g>
    <path d="M354 877l26-7" stroke="#eca093" strokeWidth="5" />
    <path d="M378 864l15 4-13 9z" fill="#d8281c" />
    <path d="M351 878l9 34" stroke="#1414a5" strokeWidth="5" />
    <path d="M352 911l12-3-2 15z" fill="#1414a5" />
    <circle cx="349" cy="878" r="5.500" fill="#111" />
    <path d="M347 871l4 5 4-5" stroke="#2c9a48" fill="none" />
    <path d="M351 875h4v4h-4z" fill="#ddd" />
    <path d="M351 880l3 9" stroke="#1414a5" strokeWidth="5" />
    <text x="398" y="865" fontSize="13" fill="#d8443c">X</text>
    <text x="361" y="929" fontSize="13" fill="#1b4fc4">Z</text>
  </svg>
);

const Workspace = () => (
  <main className="relative flex flex-1 flex-col">
    <Scene3D />
    <div className="relative flex flex-1 flex-col">
      <div className="flex h-[33px] justify-between">
        <CommandTabs />
        <div className="flex items-start pr-[7px]">
          <button aria-label="Volet gauche" className="mt-[10px]"><PageIcon /></button>
          <button aria-label="Volet droit" className="mt-[10px] ml-[19px]"><PageIcon right /></button>
          <button aria-label="Réduire le document" className="mt-[28px] ml-[21px] h-[3px] w-4 bg-[#999]" />
          <button aria-label="Restaurer le document" className="mt-[11px] ml-[17px]"><RestoreIcon color="#999" /></button>
          <button aria-label="Fermer le document" className="mt-[2px] ml-2 flex h-[38px] w-[38px] items-center justify-center border border-[#999]"><CloseIcon color="#666" /></button>
        </div>
      </div>
      <div className="flex flex-1">
        <FeaturePanel />
        <div className="flex min-w-0 flex-1 items-start justify-between">
          <div className="flex flex-1 justify-center pt-[6px] pr-[6px]"><HudToolbar /></div>
          <div className="-ml-10 mt-[43px] flex w-10 flex-col border-t border-l border-[#808080]">
            {taskPane.map(([label, icon]) => (
              <button key={label} aria-label={label} className="flex h-9 items-center justify-center overflow-hidden border-b border-[#808080] bg-[#d3d3d3] first:bg-[#f7f7f7]">
                {icon}
              </button>
            ))}
          </div>
        </div>
      </div>
    </div>
  </main>
);

const navShapes = ["M3 1v14M14 1v14L5 8z", "M12 1v14L3 8z", "M5 1v14l9-7z", "M14 1v14M3 1v14l9-7z"];

const BottomTabs = () => (
  <div className="flex h-[26px] shrink-0 border-t border-b border-[#808080] bg-[#f7f7f7] text-[18px]">
    <div className="ml-[2px] flex w-[97px] border-t border-[#111] border-r border-r-[#808080]">
      {navShapes.map((d) => (
        <button key={d} aria-label="Naviguer dans les onglets" className="flex flex-1 items-center justify-center border border-[#8d90a5] bg-[#a9adc2]">
          <Svg w={17} h={16} vb="0 0 17 16"><path d={d} fill="#858a9e" stroke="#858a9e" /></Svg>
        </button>
      ))}
    </div>
    <button className="w-[98px] pb-[2px] pl-1 font-bold leading-none">Modèle</button>
    <button className="w-[95px] border-l border-[#808080] bg-[#d3d3d3] pb-[2px] leading-none">Vues 3D</button>
    <button className="w-[238px] border-x border-[#808080] bg-[#d3d3d3] pr-3 pb-[2px] leading-none">Etude de mouvement 1</button>
  </div>
);

const StatusBar = () => (
  <footer className="flex h-[28px] shrink-0 items-center justify-between border-b-2 border-[#b0b0b0] bg-[#f7f7f7] pt-[3px] pr-1 pl-px">
    <span>SOLIDWORKS Edition étudiante - Utilisation universitaire uniquement</span>
    <span className="flex items-center gap-[118px]">
      Edition: Pièce
      <Svg w={28} h={26} vb="0 0 28 26">
        <path d="M1 3L10 1l17 12v3l-10 9L1 12z" fill="#f4f4f4" stroke="#555" />
        <path d="M1 12l16 10 10-9M17 22v3" stroke="#555" />
        <circle cx="7" cy="6" r="2" stroke="#333" />
        <path d="M14 6l-4 6M18 9l-4 6M22 12l-4 6" stroke="#333" strokeWidth="1.500" />
      </Svg>
    </span>
  </footer>
);

const Chrome = () => (
  <Svg s={36} vb="0 0 36 36">
    <circle cx="18" cy="18" r="18" fill="#2a9a48" />
    <path d="M18 18L2.400 9A18 18 0 0 1 33.600 9z" fill="#dc3328" />
    <path d="M18 9h15.600A18 18 0 0 1 18 36l7.800-13.500z" fill="#fbc82c" />
    <path d="M2.400 9l7.800 13.500L18 9z" fill="#dc3328" />
    <circle cx="18" cy="18" r="9" fill="#fff" />
    <circle cx="18" cy="18" r="7.200" fill="#2b8fe8" />
  </Svg>
);

const TaskButton = ({ label, children, badge, badgeColor, running, className = "" }) => (
  <button aria-label={label} className={"relative flex h-[60px] w-[66px] items-center justify-center " + className}>
    {children}
    {badge && (
      <span className={"absolute top-1 left-[41px] flex size-6 items-center justify-center rounded-full text-[16px] leading-none text-white " + badgeColor}>
        {badge}
      </span>
    )}
    {running && <span className="absolute bottom-0 h-[5px] w-[9px] rounded-full bg-[#777]" />}
  </button>
);

const Taskbar = () => (
  <div className="relative flex h-[70px] shrink-0 items-center bg-[#dadada] text-[16px] text-[#1a1a1a]">
    <div className="flex-1" />
    <div className="flex items-center pl-[34px] pb-[2px]">
      <TaskButton label="Démarrer">
        <Svg s={36} vb="0 0 36 36">
          <path d="M1 1h16v16H1z" fill="#4faaf0" />
          <path d="M19 1h16v16H19zM1 19h16v16H1z" fill="#2190e6" />
          <path d="M19 19h16v16H19z" fill="#0a7dd8" />
        </Svg>
      </TaskButton>
      <TaskButton label="Explorateur de fichiers">
        <Svg s={36} vb="0 0 36 36">
          <path d="M0 2h12l3 4v6H0z" fill="#d08b16" />
          <path d="M0 8h13l3-4h20v30H0z" fill="#fbc12d" />
          <path d="M6 34V26l3-3h18l3 3v8z" fill="#0a6dc4" />
          <path d="M10 29h16" stroke="#084f92" strokeWidth="2" />
        </Svg>
      </TaskButton>
      <TaskButton label="WhatsApp" badge="4" badgeColor="bg-[#0a7dd8]" running>
        <Svg s={36} vb="0 0 36 36">
          <path d="M3 33l2-8A15 15 0 1 1 12 31z" fill="#e4e4e4" stroke="#2a9a48" strokeWidth="3.500" />
          <path d="M11 9c-2 2-2 5 1 9s7 8 11 8c2 0 4-2 3-4l-4-3-3 2c-2-1-3-3-4-5l1-3-2-4z" fill="#2a9a48" />
        </Svg>
      </TaskButton>
      <TaskButton label="Chrome"><Chrome /></TaskButton>
      <TaskButton label="Freelancer">
        <Svg w={26} h={20} vb="0 0 26 20">
          <path d="M0 1l12 2 4-3 10 1-7 3-5 9-7 7 2-9-7-4 5-1z" fill="#2b93e6" />
          <path d="M12 3l-5 8 7 2z" fill="#5fb4f3" />
        </Svg>
      </TaskButton>
      <TaskButton label="Chrome, profil m" badge="m" badgeColor="bg-[#53369d] font-bold" running><Chrome /></TaskButton>
      <TaskButton label="SOLIDWORKS 2024">
        <span className="absolute inset-x-1 inset-y-0 rounded-md border border-[#cfcfcf] bg-[#ececec]" />
        <Svg s={36} vb="0 0 36 36" className="relative">
          <path d="M1 7L18 1l17 6v20l-17 7L1 27z" fill="#d12a23" stroke="#111" strokeWidth="1.500" />
          <path d="M18 11l17-4v20l-17 7z" fill="#7d0f0c" />
          <path d="M1 7l17 4 17-4M18 11v20" stroke="#111" />
          <text x="4" y="25" fontSize="18" fontWeight="bold" fill="#fff">S</text>
          <text x="18" y="24" fontSize="15" fontWeight="bold" fill="#fff">W</text>
          <text x="11" y="35" fontSize="10" fontWeight="bold" fill="#fff" stroke="#000" strokeWidth="2" paintOrder="stroke">2024</text>
        </Svg>
        <span className="absolute bottom-0 h-[5px] w-6 rounded-full bg-[#0a7dd8]" />
      </TaskButton>
    </div>
    <div className="flex flex-1 items-center justify-end pr-[33px]">
      <button aria-label="Icônes masquées"><Svg w={16} h={10} vb="0 0 16 10"><path d="M1 9l7-7 7 7" stroke="#222" strokeWidth="1.800" /></Svg></button>
      <button aria-label="Outil" className="ml-[31px]">
        <Svg s={20} vb="0 0 20 20">
          <path d="M2 1h8l5 4 3 4-2 3-4-4-2 1L4 18l-3 1 1-4 6-7-2-3-4-1z" fill="#333" />
          <path d="M11 10l4 3-4 5" stroke="#333" strokeWidth="2.500" />
          <path d="M4 3l5 1 4 4M3 16l5-6" stroke="#aaa" />
        </Svg>
      </button>
      <button aria-label="Sécurité" className="ml-[26px]">
        <Svg w={24} h={26} vb="0 0 24 26">
          <path d="M12 1c3 2 6 3 10 3v8c0 7-5 10-10 13C6 22 1 19 1 12V4c4 0 8-1 11-3z" fill="#1683dd" />
          <path d="M12 1v24C6 22 1 19 1 12h21V4c-4 0-7-1-10-3z" fill="#0f6fc4" opacity="0.5" />
          <circle cx="17" cy="19" r="6.500" fill="#2a9a48" stroke="#dadada" />
          <path d="M14 19l2 2 4-4" stroke="#fff" strokeWidth="1.300" />
        </Svg>
      </button>
      <button aria-label="Clavier" className="ml-[23px]">
        <Svg w={25} h={18} vb="0 0 25 18">
          <rect x="1" y="1" width="23" height="16" rx="2" stroke="#222" strokeWidth="1.500" />
          <path d="M4 6h17M6 9h15" stroke="#222" strokeWidth="1.800" strokeDasharray="2 2.200" />
          <path d="M7 13h11" stroke="#222" strokeWidth="1.600" />
        </Svg>
      </button>
      <button className="ml-[28px] text-center text-[17px] leading-[23px]">FRA<br />FR</button>
      <button aria-label="Réseau, son et batterie" className="ml-[29px] flex items-center gap-3">
        <Svg w={24} h={20} vb="0 0 24 20">
          <path d="M1 7c6-7 16-7 22 0M4 11c5-5 11-5 16 0M8 14c3-3 5-3 8 0" stroke="#222" strokeWidth="1.600" />
          <circle cx="12" cy="17" r="2" fill="#222" />
        </Svg>
        <Svg w={24} h={20} vb="0 0 24 20">
          <path d="M1 7h4l5-5v16l-5-5H1z" stroke="#222" strokeWidth="1.500" strokeLinejoin="round" />
          <path d="M13 7c2 2 2 4 0 6M16 4c4 4 4 8 0 12M19 1c5 5 5 13 0 18" stroke="#222" strokeWidth="1.500" />
        </Svg>
        <Svg w={25} h={20} vb="0 0 25 20">
          <rect x="2" y="5" width="19" height="13" rx="3" stroke="#222" strokeWidth="1.500" />
          <path d="M5 8h13v7H5z" fill="#111" />
          <path d="M22 9h2v5h-2z" fill="#222" />
          <path d="M5 0L0 8h4l-2 5 7-7H5z" fill="#222" stroke="#dadada" strokeWidth="0.700" />
        </Svg>
      </button>
      <button className="ml-[25px] text-right text-[17px] leading-[24px]">18:49<br />06/11/2024</button>
      <button aria-label="Notifications" className="ml-[13px]">
        <Svg w={20} h={22} vb="0 0 20 22">
          <path d="M1.500 17.500h17l-2-4V8c0-9-13-9-13 0v5.500z" stroke="#222" strokeWidth="1.500" strokeLinejoin="round" />
          <path d="M7 18c0 3 6 3 6 0" stroke="#222" strokeWidth="1.500" />
        </Svg>
      </button>
    </div>
  </div>
);

const Watermark = () => (
  <div className="pointer-events-none absolute inset-x-0 bottom-0 flex h-[134px] flex-col items-center font-bold text-[#8888881f] font-['DejaVu_Sans','Open_Sans',sans-serif]">
    <span dir="rtl" className="text-[66px] leading-[72px]">مستقل</span>
    <span className="text-[40px] leading-[44px] font-['Liberation_Sans',sans-serif]">mostaql.com</span>
  </div>
);

export default function App() {
  return (
    <div className="relative flex min-h-screen flex-col overflow-hidden bg-[#f7f7f7] text-[17px] text-black font-['Open_Sans','Noto_Sans',sans-serif]">
      <SharedPaints />
      <TitleBar />
      <Ribbon />
      <Workspace />
      <BottomTabs />
      <StatusBar />
      <Taskbar />
      <Watermark />
    </div>
  );
}
